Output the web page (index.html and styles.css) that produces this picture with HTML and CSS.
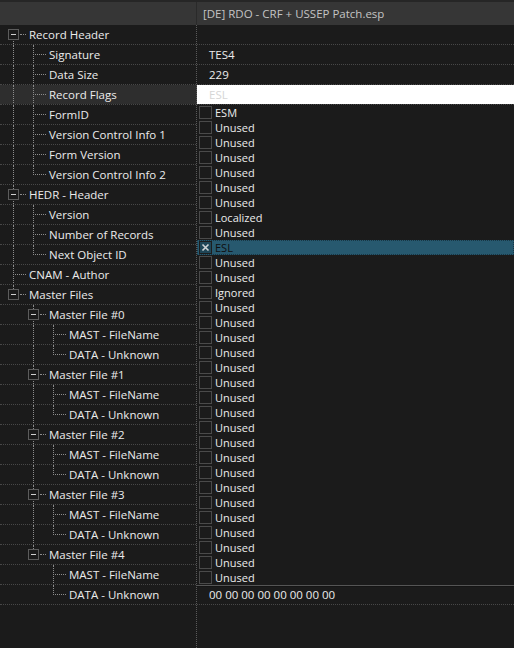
FILE: index.html
```html
<!DOCTYPE html>
<html>
<head>
<meta charset="utf-8">
<link rel="stylesheet" href="styles.css">
</head>
<body>
<div class="view">
  <div class="head">
    <div class="hc1"></div>
    <div class="hc2">[DE] RDO - CRF + USSEP Patch.esp</div>
  </div>
  <div class="tree">
    <div class="row"><div class="name"><span class="g node down"><i class="box"></i></span><span class="label">Record Header</span></div><div class="val"></div></div>
    <div class="row"><div class="name"><span class="g pipe"></span><span class="g tee"></span><span class="label">Signature</span></div><div class="val">TES4</div></div>
    <div class="row"><div class="name"><span class="g pipe"></span><span class="g tee"></span><span class="label">Data Size</span></div><div class="val">229</div></div>
    <div class="row sel"><div class="name"><span class="g pipe"></span><span class="g tee"></span><span class="label">Record Flags</span></div><div class="val edit">ESL</div></div>
    <div class="row"><div class="name"><span class="g pipe"></span><span class="g tee"></span><span class="label">FormID</span></div><div class="val"></div></div>
    <div class="row"><div class="name"><span class="g pipe"></span><span class="g tee"></span><span class="label">Version Control Info 1</span></div><div class="val"></div></div>
    <div class="row"><div class="name"><span class="g pipe"></span><span class="g tee"></span><span class="label">Form Version</span></div><div class="val"></div></div>
    <div class="row"><div class="name"><span class="g pipe"></span><span class="g ell"></span><span class="label">Version Control Info 2</span></div><div class="val"></div></div>
    <div class="row"><div class="name"><span class="g node up down"><i class="box"></i></span><span class="label">HEDR - Header</span></div><div class="val"></div></div>
    <div class="row"><div class="name"><span class="g pipe"></span><span class="g tee"></span><span class="label">Version</span></div><div class="val"></div></div>
    <div class="row"><div class="name"><span class="g pipe"></span><span class="g tee"></span><span class="label">Number of Records</span></div><div class="val"></div></div>
    <div class="row"><div class="name"><span class="g pipe"></span><span class="g ell"></span><span class="label">Next Object ID</span></div><div class="val"></div></div>
    <div class="row"><div class="name"><span class="g tee"></span><span class="label">CNAM - Author</span></div><div class="val"></div></div>
    <div class="row"><div class="name"><span class="g node up"><i class="box"></i></span><span class="label">Master Files</span></div><div class="val"></div></div>

    <div class="row"><div class="name"><span class="g"></span><span class="g node up down"><i class="box"></i></span><span class="label">Master File #0</span></div><div class="val"></div></div>
    <div class="row"><div class="name"><span class="g"></span><span class="g pipe"></span><span class="g tee"></span><span class="label">MAST - FileName</span></div><div class="val"></div></div>
    <div class="row"><div class="name"><span class="g"></span><span class="g pipe"></span><span class="g ell"></span><span class="label">DATA - Unknown</span></div><div class="val"></div></div>

    <div class="row"><div class="name"><span class="g"></span><span class="g node up down"><i class="box"></i></span><span class="label">Master File #1</span></div><div class="val"></div></div>
    <div class="row"><div class="name"><span class="g"></span><span class="g pipe"></span><span class="g tee"></span><span class="label">MAST - FileName</span></div><div class="val"></div></div>
    <div class="row"><div class="name"><span class="g"></span><span class="g pipe"></span><span class="g ell"></span><span class="label">DATA - Unknown</span></div><div class="val"></div></div>

    <div class="row"><div class="name"><span class="g"></span><span class="g node up down"><i class="box"></i></span><span class="label">Master File #2</span></div><div class="val"></div></div>
    <div class="row"><div class="name"><span class="g"></span><span class="g pipe"></span><span class="g tee"></span><span class="label">MAST - FileName</span></div><div class="val"></div></div>
    <div class="row"><div class="name"><span class="g"></span><span class="g pipe"></span><span class="g ell"></span><span class="label">DATA - Unknown</span></div><div class="val"></div></div>

    <div class="row"><div class="name"><span class="g"></span><span class="g node up down"><i class="box"></i></span><span class="label">Master File #3</span></div><div class="val"></div></div>
    <div class="row"><div class="name"><span class="g"></span><span class="g pipe"></span><span class="g tee"></span><span class="label">MAST - FileName</span></div><div class="val"></div></div>
    <div class="row"><div class="name"><span class="g"></span><span class="g pipe"></span><span class="g ell"></span><span class="label">DATA - Unknown</span></div><div class="val"></div></div>

    <div class="row"><div class="name"><span class="g"></span><span class="g node up"><i class="box"></i></span><span class="label">Master File #4</span></div><div class="val"></div></div>
    <div class="row"><div class="name"><span class="g"></span><span class="g"></span><span class="g tee"></span><span class="label">MAST - FileName</span></div><div class="val"></div></div>
    <div class="row"><div class="name"><span class="g"></span><span class="g"></span><span class="g ell"></span><span class="label">DATA - Unknown</span></div><div class="val">00 00 00 00 00 00 00 00</div></div>
  </div>
  <div class="rest"><div class="rc1"></div></div>

  <ul class="dropdown">
    <li><span class="cb"></span><span class="opt">ESM</span></li>
    <li><span class="cb"></span><span class="opt">Unused</span></li>
    <li><span class="cb"></span><span class="opt">Unused</span></li>
    <li><span class="cb"></span><span class="opt">Unused</span></li>
    <li><span class="cb"></span><span class="opt">Unused</span></li>
    <li><span class="cb"></span><span class="opt">Unused</span></li>
    <li><span class="cb"></span><span class="opt">Unused</span></li>
    <li><span class="cb"></span><span class="opt">Localized</span></li>
    <li><span class="cb"></span><span class="opt">Unused</span></li>
    <li class="hl"><span class="cb on"><svg width="11" height="11" viewBox="0 0 11 11"><path d="M2.5 2.5 L8.5 8.5 M8.5 2.5 L2.5 8.5" stroke="#cfd4d6" stroke-width="1.6"/></svg></span><span class="opt">ESL</span></li>
    <li><span class="cb"></span><span class="opt">Unused</span></li>
    <li><span class="cb"></span><span class="opt">Unused</span></li>
    <li><span class="cb"></span><span class="opt">Ignored</span></li>
    <li><span class="cb"></span><span class="opt">Unused</span></li>
    <li><span class="cb"></span><span class="opt">Unused</span></li>
    <li><span class="cb"></span><span class="opt">Unused</span></li>
    <li><span class="cb"></span><span class="opt">Unused</span></li>
    <li><span class="cb"></span><span class="opt">Unused</span></li>
    <li><span class="cb"></span><span class="opt">Unused</span></li>
    <li><span class="cb"></span><span class="opt">Unused</span></li>
    <li><span class="cb"></span><span class="opt">Unused</span></li>
    <li><span class="cb"></span><span class="opt">Unused</span></li>
    <li><span class="cb"></span><span class="opt">Unused</span></li>
    <li><span class="cb"></span><span class="opt">Unused</span></li>
    <li><span class="cb"></span><span class="opt">Unused</span></li>
    <li><span class="cb"></span><span class="opt">Unused</span></li>
    <li><span class="cb"></span><span class="opt">Unused</span></li>
    <li><span class="cb"></span><span class="opt">Unused</span></li>
    <li><span class="cb"></span><span class="opt">Unused</span></li>
    <li><span class="cb"></span><span class="opt">Unused</span></li>
    <li><span class="cb"></span><span class="opt">Unused</span></li>
    <li><span class="cb"></span><span class="opt">Unused</span></li>
  </ul>
</div>
</body>
</html>
```

FILE: styles.css
```css
html, body {
  margin: 0;
  padding: 0;
  background: #1b1b1b;
}
body {
  font-family: "Open Sans", "Noto Sans", "DejaVu Sans", sans-serif;
  font-size: 11.5px;
  color: #ececec;
}
.view {
  position: relative;
  height: 648px;
  display: flex;
  flex-direction: column;
  overflow: hidden;
}
.head {
  flex: none;
  height: 23px;
  border-top: 2px solid #262626;
  background: #363636;
  display: flex;
}
.hc1 {
  width: 196px;
  border-right: 1px solid #2a2a2a;
}
.hc2 {
  padding-left: 6px;
  line-height: 23px;
  color: #c4c4c4;
  white-space: nowrap;
}
.tree {
  flex: none;
  display: flex;
  flex-direction: column;
}
.row {
  height: 20px;
  box-sizing: border-box;
  border-bottom: 1px dotted #474747;
  display: flex;
}
.name {
  flex: none;
  width: 197px;
  box-sizing: border-box;
  border-right: 1px dotted #5a5a5a;
  padding-left: 3px;
  display: flex;
  align-items: stretch;
  white-space: nowrap;
  overflow: hidden;
}
.row.sel .name {
  background: #2e2e2e;
}
.label {
  margin-left: 6px;
  line-height: 19px;
}
.val {
  flex: 1;
  padding-left: 12px;
  line-height: 19px;
  white-space: nowrap;
}
.val.edit {
  background: #ffffff;
  color: #d6d6d6;
}
.g {
  position: relative;
  width: 20px;
  flex: none;
}
.g.pipe::before,
.g.tee::before,
.g.ell::before,
.g.node.up::before {
  content: "";
  position: absolute;
  left: 10px;
  top: 0;
  bottom: -1px;
  border-left: 1px dotted #8c8c8c;
}
.g.ell::before {
  bottom: auto;
  height: 10px;
}
.g.node.up::before {
  bottom: auto;
  height: 4px;
}
.g.node.down .box::before {
  content: "";
  position: absolute;
  left: 4px;
  top: 11px;
  height: 7px;
  border-left: 1px dotted #8c8c8c;
}
.g.tee::after,
.g.ell::after,
.g.node::after {
  content: "";
  position: absolute;
  left: 12px;
  width: 11px;
  top: 9px;
  border-top: 1px dotted #8c8c8c;
}
.g.node::after {
  left: 17px;
  width: 6px;
}
.box {
  position: absolute;
  left: 5px;
  top: 4px;
  width: 9px;
  height: 9px;
  border: 1px solid #5c5c5c;
}
.box::after {
  content: "";
  position: absolute;
  left: 2px;
  top: 4px;
  width: 5px;
  height: 1px;
  background: #cfcfcf;
}
.rest {
  flex: 1;
  display: flex;
}
.rc1 {
  width: 196px;
  border-right: 1px dotted #5a5a5a;
}
.dropdown {
  position: absolute;
  left: 197px;
  right: 0;
  top: 105px;
  margin: 0;
  padding: 0;
  list-style: none;
  background: #1b1b1b;
  border-bottom: 1px solid #555555;
  box-shadow: 0 1px 0 #151515;
}
.dropdown li {
  height: 15px;
  display: flex;
  align-items: center;
  white-space: nowrap;
  color: #ececec;
}
.opt {
  font-size: 11px;
  line-height: 15px;
  height: 15px;
}
.cb {
  width: 11px;
  height: 11px;
  border: 1px solid #4a4a4a;
  margin: 0 3px 0 2px;
  flex: none;
  display: flex;
  align-items: center;
  justify-content: center;
}
.dropdown li.hl {
  background: #27596f;
  outline: 1px dotted #173645;
  outline-offset: -1px;
}
.dropdown li.hl .opt {
  color: #0f0f0f;
}
.cb.on {
  background: #1f4657;
  border-color: #1d1d1d;
}
```
